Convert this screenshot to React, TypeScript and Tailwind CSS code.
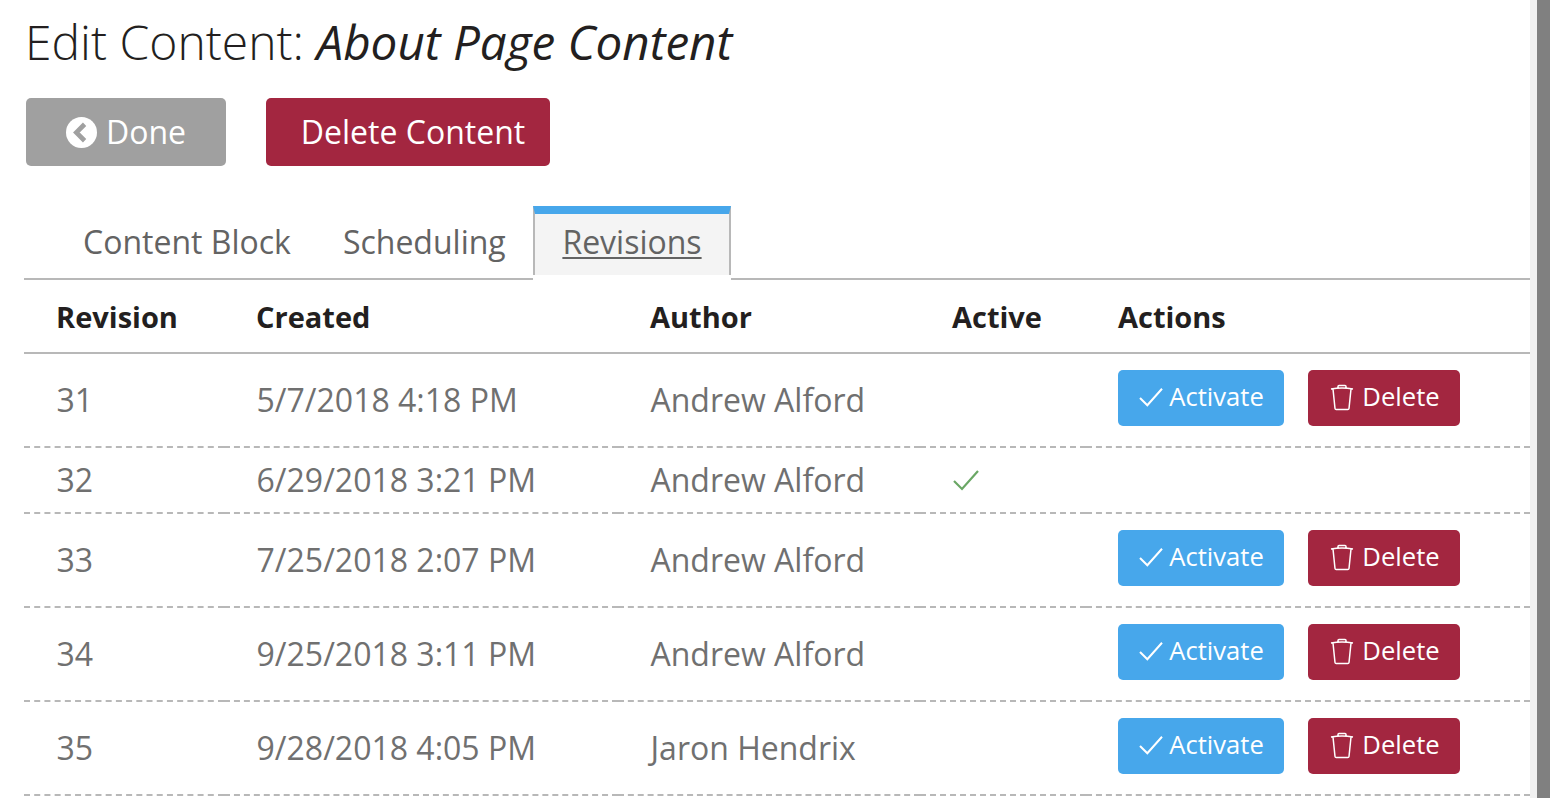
import React from 'react';

const rows = [
  { rev: '31', created: '5/7/2018 4:18 PM', author: 'Andrew Alford', active: false },
  { rev: '32', created: '6/29/2018 3:21 PM', author: 'Andrew Alford', active: true },
  { rev: '33', created: '7/25/2018 2:07 PM', author: 'Andrew Alford', active: false },
  { rev: '34', created: '9/25/2018 3:11 PM', author: 'Andrew Alford', active: false },
  { rev: '35', created: '9/28/2018 4:05 PM', author: 'Jaron Hendrix', active: false },
];

const Check = ({ className }: { className?: string }) => (
  <svg viewBox="0 0 28 24" fill="none" stroke="currentColor" strokeWidth="2.2" className={className}>
    <path d="M2 13l8 8L26 3" />
  </svg>
);

const Trash = () => (
  <svg viewBox="0 0 24 27" fill="none" stroke="currentColor" strokeWidth="1.5" className="w-[24px] h-[27px] shrink-0 ml-[2px] -mt-[2px]">
    <path d="M1 5q11-2 22 0M3 5l2 19.5a1.2 1.2 0 0 0 1.2 1h11.6a1.2 1.2 0 0 0 1.2-1L21 5M8 4V2.5q0-1 1-1h6q1 0 1 1V4" />
  </svg>
);

export default function App() {
  return (
    <div className="h-[798px] overflow-hidden flex bg-white font-['Open_Sans',sans-serif]">
      <main className="w-[1530px] pl-[24px]">
        <h1 className="pt-[12px] h-[98px] pl-[1px] text-[48px] leading-[60px] font-light text-[#231f20]">
          Edit Content: <em className="font-normal italic text-[47.6px]">About Page Content</em>
        </h1>

        <div className="flex gap-[40px] pl-[2px]">
          <button className="w-[200px] h-[68px] rounded-[5px] bg-[#a0a0a0] text-white text-[32px] flex items-center justify-center gap-[9px]">
            <svg viewBox="0 0 30 30" className="w-[31px] h-[31px]">
              <circle cx="15" cy="15" r="15" fill="#fff" />
              <path d="M18 7l-8 8 8 8" fill="none" stroke="#a0a0a0" strokeWidth="4.5" />
            </svg>
            Done
          </button>
          <button className="w-[284px] h-[68px] rounded-[5px] bg-[#a32640] text-white text-[32px] flex items-center justify-center pl-[10px]">
            Delete Content
          </button>
        </div>

        <div className="mt-[40px] h-[74px] flex border-b-2 border-[#b8b8b8] text-[32px] text-[#636363]">
          <div className="pl-[59px] pt-[14px] w-[509px] flex gap-[52px] leading-[44px]">
            <span>Content Block</span>
            <span>Scheduling</span>
          </div>
          <div className="relative w-[198px] h-[74px] bg-[#f4f4f4] border-x-2 border-[#b8b8b8] border-t-[8px] border-t-[#47a7eb] text-center leading-[44px] pt-[6px] underline decoration-[2px] underline-offset-[3px]">
            Revisions
            <div className="absolute -left-[2px] -right-[2px] -bottom-[2px] h-[7px] bg-white" />
          </div>
        </div>

        <table className="w-[1506px] table-fixed border-collapse">
          <colgroup>
            <col className="w-[200px]" />
            <col className="w-[394px]" />
            <col className="w-[302px]" />
            <col className="w-[166px]" />
            <col />
          </colgroup>
          <thead>
            <tr className="h-[73px] border-b-2 border-[#b8b8b8] text-left text-[29px] font-bold text-[#231f20]">
              <th className="pl-[32px] pt-[2px] font-bold">Revision</th>
              <th className="pl-[32px] pt-[2px] font-bold">Created</th>
              <th className="pl-[32px] pt-[2px] font-bold">Author</th>
              <th className="pl-[32px] pt-[2px] font-bold">Active</th>
              <th className="pl-[32px] pt-[2px] font-bold">Actions</th>
            </tr>
          </thead>
          <tbody className="text-[32px] text-[#707070]">
            {rows.map((r) => (
              <tr key={r.rev} className={`border-b-2 border-dashed border-[#b8b8b8] ${r.active ? 'h-[66px]' : 'h-[94px]'}`}>
                <td className="pl-[32.5px]">{r.rev}</td>
                <td className="pl-[32.5px]">{r.created}</td>
                <td className="pl-[32.5px]">{r.author}</td>
                <td className="pl-[32px]">
                  {r.active && <Check className="w-[28px] h-[24px] text-[#6aa765]" />}
                </td>
                <td className="pl-[32px]">
                  {!r.active && (
                    <div className="flex gap-[24px] -mt-[4px]">
                      <button className="w-[166px] h-[56px] rounded-[5px] bg-[#47a7eb] text-white text-[25.6px] flex items-center justify-center gap-[5px]">
                        <Check className="w-[26px] h-[22px] -mt-[3px]" />
                        <span className="-mt-[2px]">Activate</span>
                      </button>
                      <button className="w-[152px] h-[56px] rounded-[5px] bg-[#a32640] text-white text-[25.6px] flex items-center justify-center gap-[8px]">
                        <Trash />
                        <span className="-mt-[2px]">Delete</span>
                      </button>
                    </div>
                  )}
                </td>
              </tr>
            ))}
          </tbody>
        </table>
      </main>
      <div className="w-[7px] bg-[#f0f0f0]" />
      <div className="w-[13px] bg-[#808080]" />
    </div>
  );
}
